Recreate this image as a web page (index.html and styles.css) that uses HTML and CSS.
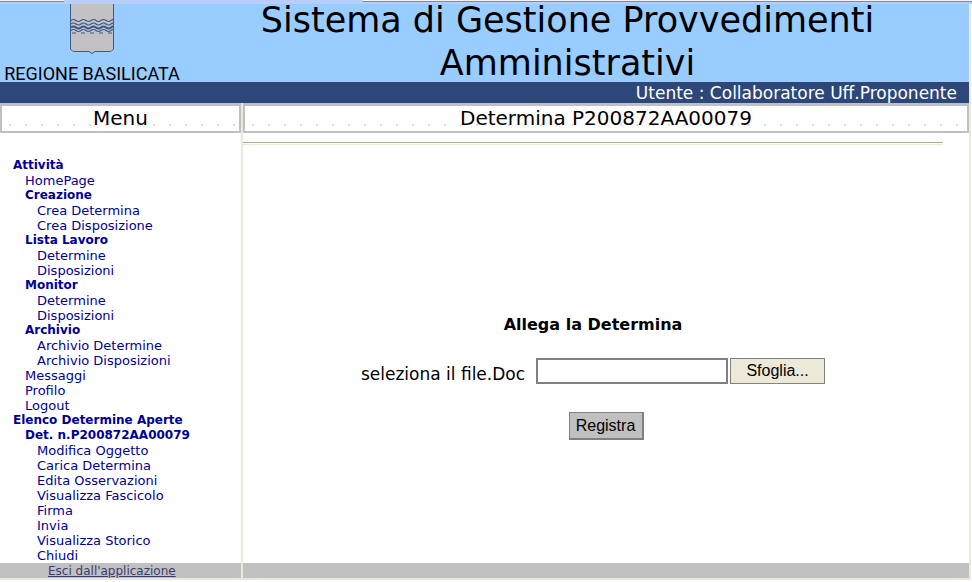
FILE: index.html
```html
<!DOCTYPE html>
<html lang="it">
<head>
<meta charset="utf-8">
<title>Sistema di Gestione Provvedimenti Amministrativi</title>
<link rel="stylesheet" href="styles.css">
</head>
<body>
<div class="chrome"><span class="chrome-left"></span><span class="chrome-tab"></span><span class="chrome-right"></span></div>
<div class="page">
  <header class="banner">
    <div class="brand">
      <svg class="crest" viewBox="0 0 44 50" aria-hidden="true">
        <path d="M0 0H44V46Q44 47 42 47H25L22 50L19 47H2Q0 47 0 45Z" fill="#c2c2c4"/>
        <path d="M.5 0V45L3 47.500H19L22 49.500L25 47.500H41L43.500 45V0" fill="none" stroke="#3f5b8a"/>
        <g fill="none" stroke="#36588f" stroke-width="1.200">
          <path d="M1 16.500q2.500-2 5 0t5 0t5 0t5 0t5 0t5 0t5 0t5 0t2 0"/>
          <path d="M1 20q2.500-2 5 0t5 0t5 0t5 0t5 0t5 0t5 0t5 0t2 0"/>
          <path d="M1 23.500q2.500-2 5 0t5 0t5 0t5 0t5 0t5 0t5 0t5 0t2 0" stroke-width="2"/>
          <path d="M1 26.500q2.500-2 5 0t5 0t5 0t5 0t5 0t5 0t5 0t5 0t2 0"/>
          <path d="M2 29h41" stroke-dasharray="4 5"/>
        </g>
      </svg>
      <span class="brand-name">REGIONE BASILICATA</span>
    </div>
    <h1 class="title">Sistema di Gestione Provvedimenti Amministrativi</h1>
  </header>
  <div class="userbar">Utente : Collaboratore Uff.Proponente</div>
  <div class="columns">
    <nav class="sidebar" aria-label="Menu">
      <h2 class="heading">Menu</h2>
      <ul class="menu">
        <li><a class="group" href="#">Attività</a>
          <ul>
            <li><a href="#">HomePage</a></li>
            <li><a class="group" href="#">Creazione</a>
              <ul><li><a href="#">Crea Determina</a></li><li><a href="#">Crea Disposizione</a></li></ul></li>
            <li><a class="group" href="#">Lista Lavoro</a>
              <ul><li><a href="#">Determine</a></li><li><a href="#">Disposizioni</a></li></ul></li>
            <li><a class="group" href="#">Monitor</a>
              <ul><li><a href="#">Determine</a></li><li><a href="#">Disposizioni</a></li></ul></li>
            <li><a class="group" href="#">Archivio</a>
              <ul><li><a href="#">Archivio Determine</a></li><li><a href="#">Archivio Disposizioni</a></li></ul></li>
            <li><a href="#">Messaggi</a></li>
            <li><a href="#">Profilo</a></li>
            <li><a href="#">Logout</a></li>
          </ul></li>
        <li><a class="group" href="#">Elenco Determine Aperte</a>
          <ul>
            <li><a class="group" href="#">Det. n.P200872AA00079</a>
              <ul>
                <li><a href="#">Modifica Oggetto</a></li>
                <li><a href="#">Carica Determina</a></li>
                <li><a href="#">Edita Osservazioni</a></li>
                <li><a href="#">Visualizza Fascicolo</a></li>
                <li><a href="#">Firma</a></li>
                <li><a href="#">Invia</a></li>
                <li><a href="#">Visualizza Storico</a></li>
                <li><a href="#">Chiudi</a></li>
              </ul></li>
          </ul></li>
      </ul>
      <div class="foot"><a href="#">Esci dall'applicazione</a></div>
    </nav>
    <main class="content">
      <h2 class="heading">Determina P200872AA00079</h2>
      <hr class="rule">
      <form class="upload">
        <h3 class="form-title">Allega la Determina</h3>
        <div class="file-row">
          <label for="doc">seleziona il file.Doc</label>
          <input class="file-name" id="doc" type="text">
          <button class="browse" type="button">Sfoglia...</button>
        </div>
        <button class="submit" type="button">Registra</button>
      </form>
      <div class="foot"></div>
    </main>
  </div>
</div>
</body>
</html>
```
FILE: styles.css
```css
* { box-sizing: border-box; }
body {
  margin: 0;
  background: #fff;
  color: #000;
  font-family: Verdana, "DejaVu Sans", sans-serif;
}
ul { list-style: none; margin: 0; padding: 0; }
h1, h2, h3 { margin: 0; font-weight: normal; }

.chrome { display: flex; height: 4px; background: #b9cdfb; }
.chrome-left { width: 64px; height: 2px; background: #f4f4f4; border-bottom: 1px solid #888; }
.chrome-tab { width: 299px; }
.chrome-right { flex: 1; height: 2px; background: #f4f4f4; border-bottom: 1px solid #888; }

.page {
  margin-right: 1px;
  border-right: 2px solid #ece9e0;
  border-bottom: 2px solid #e9e7da;
}

.banner {
  display: flex;
  align-items: flex-start;
  height: 78px;
  background: #9cf;
}
.brand {
  flex: none;
  display: flex;
  flex-direction: column;
  align-items: center;
  width: 184px;
}
.crest { flex: none; width: 44px; height: 50px; }
.brand-name {
  margin-top: 8px;
  font: 18px/24px Roboto, sans-serif;
  white-space: nowrap;
}
.title {
  flex: 1;
  margin-top: -5px;
  padding: 0 28px 0 10px;
  font-size: 35px;
  line-height: 43px;
  text-align: center;
}

.userbar {
  padding: 1px 12px 0 0;
  background: #2d4878;
  color: #fff;
  font-size: 17px;
  line-height: 20px;
  text-align: right;
}

.columns { display: flex; }
.sidebar, .content { display: flex; flex-direction: column; }
.sidebar {
  flex: none;
  width: 243px;
  border-right: 2px solid #ece9d8;
}
.content { flex: 1; }

.heading {
  height: 30px;
  border: 2px solid #c0c0c0;
  border-top-width: 3px;
  background: radial-gradient(circle, #e0e0e0 1px, transparent 1px) 0 12px / 16px 14px repeat-x;
  font-size: 20px;
  line-height: 25px;
  text-align: center;
}

.menu {
  padding: 25px 0 0 13px;
  font-size: 13px;
  line-height: 15px;
}
.menu ul { padding-left: 12px; }
.menu a { display: block; color: #009; text-decoration: none; }
.menu .group { font-size: 12px; font-weight: bold; }

.foot {
  height: 15px;
  margin-top: auto;
  background: #c0c0c0;
  font-size: 12px;
  line-height: 16px;
}
.foot a { margin-left: 48px; color: #3c3c6c; }

.rule {
  width: 700px;
  max-width: 100%;
  height: 3px;
  margin: 9px 0 0;
  border: 0;
  border-top: 1px solid #aca899;
  border-bottom: 1px solid #ece9d8;
}
.upload {
  flex: 1;
  display: flex;
  flex-direction: column;
  align-items: center;
  padding-top: 168px;
  padding-right: 26px;
  font-size: 17px;
}
.form-title { font-size: 16px; font-weight: bold; line-height: 24px; }
.file-row {
  display: flex;
  align-items: flex-end;
  margin-top: 21px;
}
.file-row label { margin-right: 11px; }
.file-name {
  width: 192px;
  height: 26px;
  margin-right: 2px;
  border: 2px solid #808080;
  background: #fff;
}
.browse, .submit {
  padding: 0;
  color: #000;
  font: 16px "Liberation Sans", sans-serif;
}
.browse {
  width: 95px;
  height: 26px;
  border: 1px solid #808080;
  background: #ece9d8;
}
.submit {
  width: 75px;
  height: 28px;
  margin: 28px 0 0 26px;
  border: 2px solid #808080;
  border-top-width: 1px;
  border-left-width: 1px;
  background: #c0c0c0;
}
```
